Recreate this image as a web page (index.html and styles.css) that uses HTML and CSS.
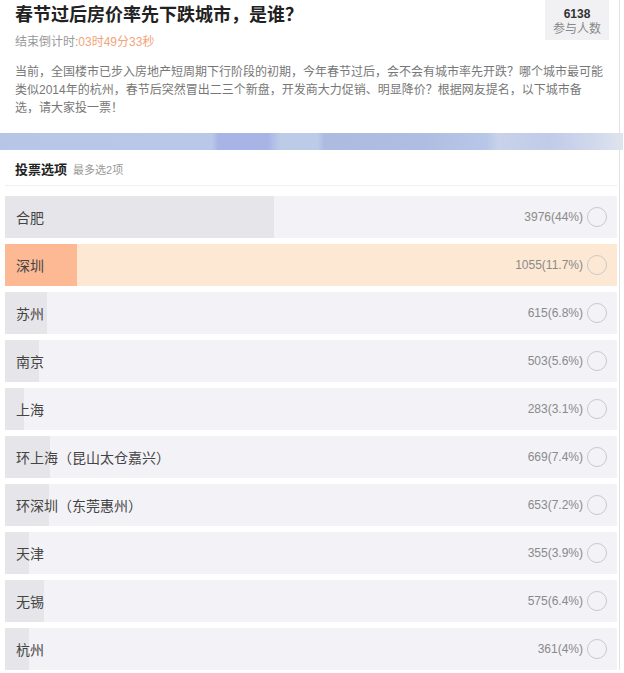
FILE: index.html
```html
<!DOCTYPE html>
<html lang="zh-CN">
<head>
  <meta charset="UTF-8">
  <meta name="viewport" content="width=device-width, initial-scale=1.0">
  <title>投票</title>
  <link rel="stylesheet" href="styles.css">
</head>
<body>
  <div class="page">
    <section class="intro">
      <div class="head">
        <div class="head-text">
          <h1 class="title">春节过后房价率先下跌城市，是谁？</h1>
          <p class="timer">结束倒计时:<span class="time">03时49分33秒</span></p>
        </div>
        <div class="stat">
          <div class="stat-num">6138</div>
          <div class="stat-label">参与人数</div>
        </div>
      </div>
      <p class="desc">当前，全国楼市已步入房地产短周期下行阶段的初期，今年春节过后，会不会有城市率先开跌？哪个城市最可能类似2014年的杭州，春节后突然冒出二三个新盘，开发商大力促销、明显降价？根据网友提名，以下城市备<br>选，请大家投一票！</p>
    </section>
    <div class="band"></div>
    <section class="vote">
      <div class="vote-head"><b>投票选项</b><span class="limit">最多选2项</span></div>
      <ul class="options">
        <li class="option"><span class="bar" style="width:44%"></span><span class="name">合肥</span><span class="count">3976(44%)</span><i class="radio"></i></li>
        <li class="option hot"><span class="bar" style="width:11.7%"></span><span class="name">深圳</span><span class="count">1055(11.7%)</span><i class="radio"></i></li>
        <li class="option"><span class="bar" style="width:6.8%"></span><span class="name">苏州</span><span class="count">615(6.8%)</span><i class="radio"></i></li>
        <li class="option"><span class="bar" style="width:5.6%"></span><span class="name">南京</span><span class="count">503(5.6%)</span><i class="radio"></i></li>
        <li class="option"><span class="bar" style="width:3.1%"></span><span class="name">上海</span><span class="count">283(3.1%)</span><i class="radio"></i></li>
        <li class="option"><span class="bar" style="width:7.4%"></span><span class="name">环上海（昆山太仓嘉兴）</span><span class="count">669(7.4%)</span><i class="radio"></i></li>
        <li class="option"><span class="bar" style="width:7.2%"></span><span class="name">环深圳（东莞惠州）</span><span class="count">653(7.2%)</span><i class="radio"></i></li>
        <li class="option"><span class="bar" style="width:3.9%"></span><span class="name">天津</span><span class="count">355(3.9%)</span><i class="radio"></i></li>
        <li class="option"><span class="bar" style="width:6.4%"></span><span class="name">无锡</span><span class="count">575(6.4%)</span><i class="radio"></i></li>
        <li class="option"><span class="bar" style="width:4%"></span><span class="name">杭州</span><span class="count">361(4%)</span><i class="radio"></i></li>
      </ul>
    </section>
  </div>
</body>
</html>
```
FILE: styles.css
```css
body {
  margin: 0;
  font-family: "Liberation Sans", "Noto Sans CJK SC", sans-serif;
  background: #fff;
  color: #333;
}

.page {
  width: 619px;
  border-right: 1px solid #e2e2e6;
}

.intro {
  padding: 0 10px 0 15px;
  height: 133px;
  box-sizing: border-box;
}

.head {
  display: flex;
  justify-content: space-between;
}

.title {
  margin: 3px 0 0;
  font-size: 18px;
  line-height: 24px;
  font-weight: bold;
  color: #222;
}

.timer {
  margin: 7px 0 0;
  font-size: 12px;
  line-height: 16px;
  color: #999;
}

.time {
  color: #f2a47a;
}

.stat {
  width: 64px;
  height: 40px;
  background: #f1f1f3;
  text-align: center;
  font-size: 12px;
  line-height: 15px;
  padding-top: 7px;
  box-sizing: border-box;
}

.stat-num {
  color: #333;
  font-weight: bold;
}

.stat-label {
  color: #888;
}

.desc {
  margin: 13px 0 0;
  font-size: 12px;
  line-height: 18px;
  color: #777;
}

.band {
  width: 623px;
  height: 17px;
  background: linear-gradient(90deg, #b7c5e6 0%, #b9c8e8 34%, #a9b4e6 35%, #a9b4e6 43%, #bccbe8 45%, #bccbe8 51%, #aebbe0 52%, #b0bde2 68%, #b8c7e8 78%, #c8d2ea 80%, #c0cbe9 88%, #d2daec 96%, #e0e4ee 100%);
}

.vote {
  padding: 0 2px 0 5px;
}

.vote-head {
  padding: 10px 0 0 10px;
  height: 36px;
  box-sizing: border-box;
  font-size: 13px;
  line-height: 20px;
  color: #222;
  border-bottom: 1px solid #f0f0f2;
}

.limit {
  margin-left: 6px;
  font-size: 11px;
  color: #999;
}

.options {
  list-style: none;
  margin: 10px 0 0;
  padding: 0;
}

.option {
  position: relative;
  display: flex;
  align-items: center;
  height: 42px;
  margin-bottom: 6px;
  padding: 0 10px 0 11px;
  background: #f3f2f6;
}

.option .bar {
  position: absolute;
  left: 0;
  top: 0;
  bottom: 0;
  background: #e6e6ea;
}

.option.hot {
  background: #fde8d4;
}

.option.hot .bar {
  background: #fdb994;
}

.name {
  position: relative;
  flex: 1;
  font-size: 14px;
  color: #444;
}

.count {
  position: relative;
  font-size: 12px;
  color: #8a8a8a;
  margin-right: 4px;
}

.radio {
  position: relative;
  width: 18px;
  height: 18px;
  border: 1px solid #c9c9cc;
  border-radius: 50%;
  background: transparent;
}
```
